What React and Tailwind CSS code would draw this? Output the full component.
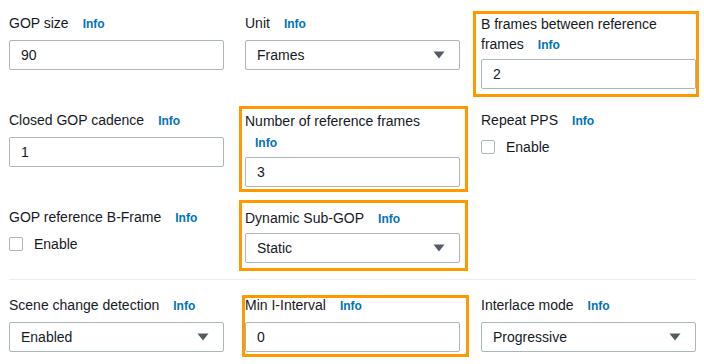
import React from 'react';

function Info({ className = 'ml-[14px]' }) {
  return <span className={`${className} text-[12px] leading-none font-bold text-[#0073bb]`}>Info</span>;
}

function Label({ children, className = '' }) {
  return (
    <div className={`leading-[20px] h-[20px] ${className}`}>
      {children}
      <Info />
    </div>
  );
}

function TextInput({ value, className = '' }) {
  return (
    <div className={`h-[30px] flex items-center px-[11px] border border-[#aab7b8] rounded-[2px] bg-white ${className}`}>
      {value}
    </div>
  );
}

function Select({ value, className = '' }) {
  return (
    <div className={`h-[30px] flex items-center justify-between pl-[11px] pr-[14px] border border-[#aab7b8] rounded-[2px] bg-white ${className}`}>
      <span>{value}</span>
      <svg width="12" height="8" viewBox="0 0 12 8">
        <polygon points="0.5,0.5 11.5,0.5 6,7.5" fill="#545b64" />
      </svg>
    </div>
  );
}

function Checkbox({ className = '' }) {
  return (
    <div className={`flex items-center h-[20px] ${className}`}>
      <span className="w-[14px] h-[14px] border border-[#aab7b8] rounded-[2px] bg-white" />
      <span className="ml-[11px]">Enable</span>
    </div>
  );
}

function Highlight({ className }) {
  return <div className={`absolute border-[3px] border-[#ff9900] pointer-events-none ${className}`} />;
}

export default function App() {
  return (
    <div className="w-[704px] h-[364px] bg-white text-[#16191f] text-[14px] font-['Liberation_Sans',Arial,sans-serif] overflow-hidden">
      <div className="pl-[9px] pr-[8px] pt-[13px]">
        {/* row 1 */}
        <div className="grid grid-cols-[215px_215px_215px] gap-x-[21px] items-start">
          <div>
            <Label>GOP size</Label>
            <TextInput value="90" className="mt-[7px]" />
          </div>
          <div>
            <Label>Unit</Label>
            <Select value="Frames" className="mt-[7px]" />
          </div>
          <div className="relative mt-[1px]">
            <Highlight className="-left-[8px] -right-[3px] -top-[3px] -bottom-[8px]" />
            <div className="leading-[20px] h-[40px]">
              B frames between reference
              <br />
              frames
              <Info />
            </div>
            <TextInput value="2" className="mt-[5px]" />
          </div>
        </div>

        {/* row 2 */}
        <div className="grid grid-cols-[215px_215px_215px] gap-x-[21px] items-start mt-[21px]">
          <div>
            <Label>Closed GOP cadence</Label>
            <TextInput value="1" className="mt-[7px]" />
          </div>
          <div className="relative mt-[1px]">
            <Highlight className="-left-[6px] -right-[8px] -top-[5px] -bottom-[5px]" />
            <div className="leading-[21px] h-[42px]">
              Number of reference frames
              <br />
              <Info className="ml-[10px]" />
            </div>
            <TextInput value="3" className="mt-[4px]" />
          </div>
          <div>
            <Label>Repeat PPS</Label>
            <Checkbox className="mt-[7px]" />
          </div>
        </div>

        {/* row 3 */}
        <div className="grid grid-cols-[215px_215px_215px] gap-x-[21px] items-start mt-[20px]">
          <div>
            <Label>GOP reference B-Frame</Label>
            <Checkbox className="mt-[7px]" />
          </div>
          <div className="relative mt-[1px]">
            <Highlight className="-left-[6px] -right-[8px] -top-[8px] -bottom-[8px]" />
            <Label>Dynamic Sub-GOP</Label>
            <Select value="Static" className="mt-[5px]" />
          </div>
          <div />
        </div>

        <div className="h-px bg-[#eaeded] mt-[16px]" />

        {/* row 4 */}
        <div className="grid grid-cols-[215px_215px_215px] gap-x-[21px] items-start mt-[15px]">
          <div>
            <Label>Scene change detection</Label>
            <Select value="Enabled" className="mt-[7px]" />
          </div>
          <div className="relative">
            <Highlight className="-left-[3px] -right-[9px] top-0 -bottom-[5px]" />
            <Label>Min I-Interval</Label>
            <TextInput value="0" className="mt-[7px]" />
          </div>
          <div>
            <Label>Interlace mode</Label>
            <Select value="Progressive" className="mt-[7px]" />
          </div>
        </div>
      </div>
    </div>
  );
}
